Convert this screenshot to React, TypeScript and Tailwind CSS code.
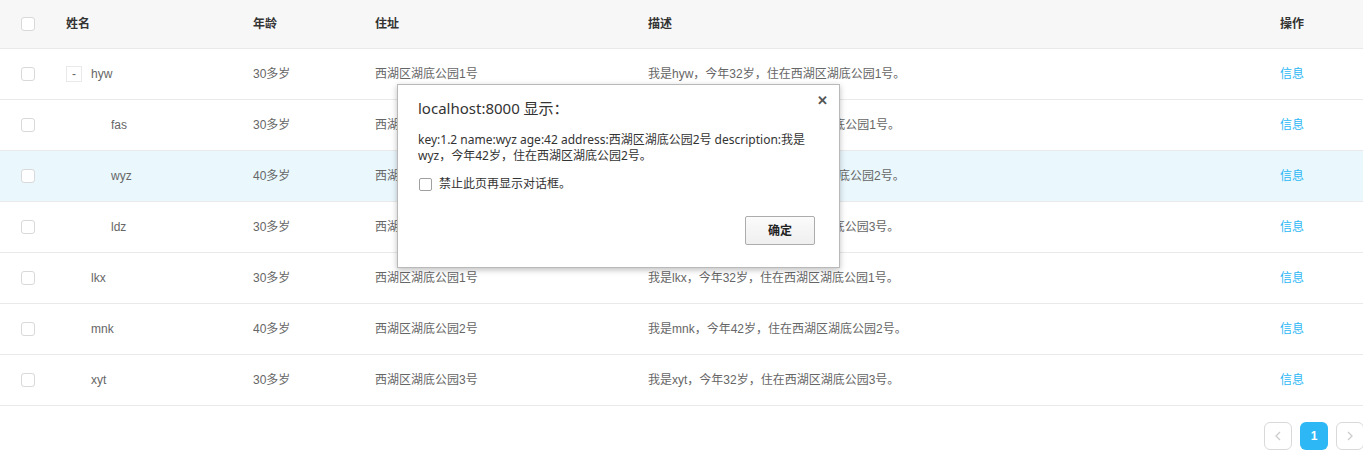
import React from "react";

type Row = { name: string; age: string; addr: string; desc: string; level: number; expander?: boolean; hl?: boolean };

const rows: Row[] = [
  { name: "hyw", age: "30多岁", addr: "西湖区湖底公园1号", desc: "我是hyw，今年32岁，住在西湖区湖底公园1号。", level: 0, expander: true },
  { name: "fas", age: "30多岁", addr: "西湖区湖底公园1号", desc: "我是fas，今年32岁，住在西湖区湖底公园1号。", level: 1 },
  { name: "wyz", age: "40多岁", addr: "西湖区湖底公园2号", desc: "我是wyz，今年42岁，住在西湖区湖底公园2号。", level: 1, hl: true },
  { name: "ldz", age: "30多岁", addr: "西湖区湖底公园3号", desc: "我是ldz，今年32岁，住在西湖区湖底公园3号。", level: 1 },
  { name: "lkx", age: "30多岁", addr: "西湖区湖底公园1号", desc: "我是lkx，今年32岁，住在西湖区湖底公园1号。", level: 0 },
  { name: "mnk", age: "40多岁", addr: "西湖区湖底公园2号", desc: "我是mnk，今年42岁，住在西湖区湖底公园2号。", level: 0 },
  { name: "xyt", age: "30多岁", addr: "西湖区湖底公园3号", desc: "我是xyt，今年32岁，住在西湖区湖底公园3号。", level: 0 },
];

const grid = "grid grid-cols-[66px_187px_122px_273px_632px_1fr] items-center";

function Check() {
  return <span className="ml-[21px] block h-[14px] w-[14px] rounded-[3px] border border-[#d9d9d9] bg-white" />;
}

export default function App() {
  return (
    <div
      className="relative h-[458px] w-[1363px] overflow-hidden bg-white text-[12px] text-[#666]"
      style={{ fontFamily: '"Liberation Sans", "Noto Sans CJK SC", sans-serif' }}
    >
      <div className={`${grid} h-[49px] border-b border-[#e9e9e9] bg-[#f7f7f7] font-bold text-[#333]`}>
        <div><Check /></div>
        <div>姓名</div>
        <div>年龄</div>
        <div>住址</div>
        <div>描述</div>
        <div>操作</div>
      </div>
      {rows.map((r, i) => (
        <div key={i} className={`${grid} h-[51px] border-b border-[#e9e9e9] ${r.hl ? "bg-[#eaf8fe]" : "bg-white"}`}>
          <div><Check /></div>
          <div className="flex items-center" style={{ paddingLeft: r.level * 20 }}>
            {r.expander ? (
              <span className="mr-[9px] flex h-[16px] w-[16px] items-center justify-center border border-[#e9e9e9] bg-white text-[12px] leading-none text-[#666]">-</span>
            ) : (
              <span className="mr-[9px] inline-block w-[16px]" />
            )}
            <span>{r.name}</span>
          </div>
          <div>{r.age}</div>
          <div>{r.addr}</div>
          <div>{r.desc}</div>
          <div className="text-[#2db7f5]">信息</div>
        </div>
      ))}
      <div className="flex justify-end gap-[8px] pr-0 pt-[16px]">
        <span className="flex h-[28px] w-[28px] items-center justify-center rounded-[6px] border border-[#d9d9d9] bg-white text-[#ccc]">
          <svg width="8" height="10" viewBox="0 0 8 10"><path d="M6 1 L2 5 L6 9" fill="none" stroke="#ccc" strokeWidth="1.3" /></svg>
        </span>
        <span className="flex h-[28px] w-[28px] items-center justify-center rounded-[6px] bg-[#2db7f5] font-bold text-white">1</span>
        <span className="-mr-[1px] flex h-[28px] w-[28px] items-center justify-center rounded-[6px] border border-[#d9d9d9] bg-white">
          <svg width="8" height="10" viewBox="0 0 8 10"><path d="M2 1 L6 5 L2 9" fill="none" stroke="#ccc" strokeWidth="1.3" /></svg>
        </span>
      </div>

      <div
        className="absolute left-[397px] top-[84px] h-[184px] w-[443px] border border-[#b9b9b9] bg-white shadow-[0_2px_6px_rgba(0,0,0,0.25)]"
        style={{ fontFamily: '"Noto Sans", "Noto Sans CJK SC", sans-serif' }}
      >
        <div className="absolute right-[11px] top-[6px] text-[13px] font-bold text-[#555]">✕</div>
        <div className="px-[20px] pt-[13px]">
          <div className="text-[15px] leading-[20px] text-[#333]">localhost:8000 显示：</div>
          <div className="mt-[14px] w-[400px] text-[12px] leading-[16px] text-[#333]">
            key:1.2 name:wyz age:42 address:西湖区湖底公园2号 description:我是wyz，今年42岁，住在西湖区湖底公园2号。
          </div>
          <div className="mt-[11px] flex items-center">
            <span className="ml-[1px] block h-[13px] w-[13px] rounded-[2px] border border-[#a0a0a0] bg-white" />
            <span className="ml-[7px] text-[12px] text-[#333]">禁止此页再显示对话框。</span>
          </div>
          <div className="mt-[23px] flex justify-end pr-[4px]">
            <span className="flex h-[29px] w-[70px] items-center justify-center rounded-[2px] border border-[#acacac] bg-gradient-to-b from-[#fbfbfb] to-[#efefef] text-[12px] font-bold text-[#222]">确定</span>
          </div>
        </div>
      </div>
    </div>
  );
}
